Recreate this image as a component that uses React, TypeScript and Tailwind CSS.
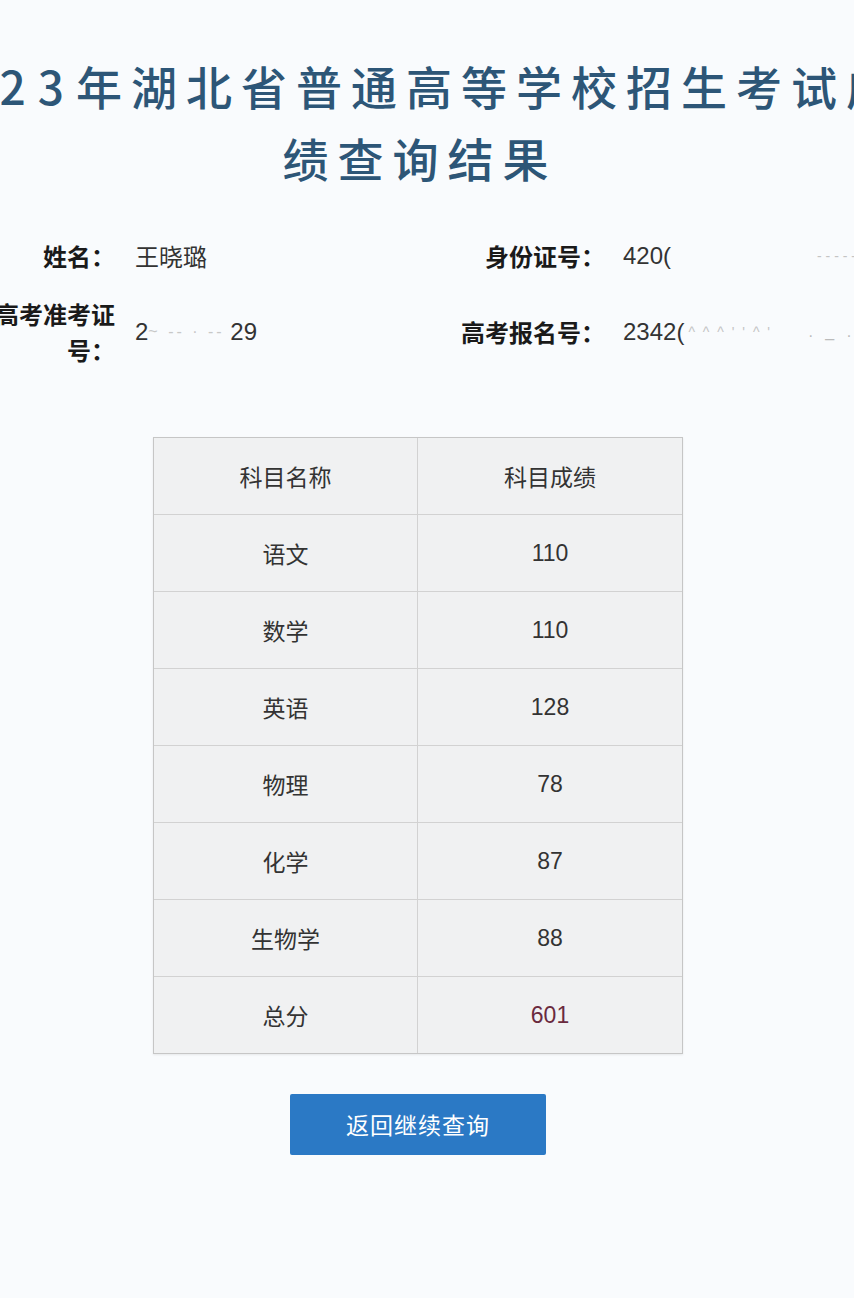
const cjk = "font-['Noto_Sans_CJK_SC',sans-serif]";
const num = "font-['Liberation_Sans','Noto_Sans_CJK_SC',sans-serif]";

const scores = [
  { name: "语文", score: "110" },
  { name: "数学", score: "110" },
  { name: "英语", score: "128" },
  { name: "物理", score: "78" },
  { name: "化学", score: "87" },
  { name: "生物学", score: "88" },
];

function Cell({ children, right }: { children: React.ReactNode; right?: boolean }) {
  return (
    <div
      className={`h-[76px] flex items-center justify-center text-[23px] text-[#333] ${
        right ? "" : "border-r border-[#d2d2d2]"
      }`}
    >
      {children}
    </div>
  );
}

export default function App() {
  return (
    <div className={`w-[854px] h-[1298px] overflow-hidden bg-[#f9fbfd] ${cjk}`}>
      {/* title, cropped on both sides like the screenshot */}
      <div className="pt-[49px] flex flex-col items-center pr-[14px] text-[46px] leading-[72px] tracking-[9px] font-medium text-[#2d5677]">
        <div className="whitespace-nowrap pr-[16px]">
          <span className="tracking-[12px]">2023</span>年湖北省普通高等学校招生考试成
        </div>
        <div className="whitespace-nowrap">绩查询结果</div>
      </div>

      {/* candidate info */}
      <div className="mt-[45px] ml-[-5px] grid grid-cols-[120px_337px_153px_1fr] gap-y-[22px] text-[24px] leading-[36px]">
        <div className="text-right font-bold text-[#1a1a1a]">姓名：</div>
        <div className="pl-5 text-[#333]">王晓璐</div>
        <div className="text-right font-bold text-[#1a1a1a]">身份证号：</div>
        <div className={`pl-[18px] text-[#333] whitespace-nowrap ${num}`}>
          420<span className="inline-block w-[14px] overflow-hidden align-top">(</span>
          <span className="inline-block w-[140px]" />
          <span className="text-[#c4c4c4] text-[14px] align-top">- - - - -</span>
        </div>

        <div className="text-right font-bold text-[#1a1a1a]">
          高考准考证
          <br />
          号：
        </div>
        <div className={`pl-5 flex items-center text-[#333] whitespace-nowrap ${num}`}>
          <span>2</span>
          <span className="shrink-0 text-[#c8c8c8] text-[16px] w-[82px] tracking-[3px] whitespace-nowrap overflow-hidden">~ -- · -- ·,</span>
          <span>29</span>
        </div>
        <div className="text-right font-bold text-[#1a1a1a] flex items-center justify-end">高考报名号：</div>
        <div className={`pl-[18px] flex items-center text-[#333] whitespace-nowrap ${num}`}>
          <span>2342</span>
          <span className="inline-block w-[12px] overflow-hidden">(</span>
          <span className="text-[#c4c4c4] text-[14px] w-[120px] tracking-[2px] self-start mt-[18px]">^ ^ ^ ' ' ^ '</span>
          <span className="text-[#bbb] text-[16px] tracking-[4px]">. _ . !2</span>
        </div>
      </div>

      {/* score table */}
      <div className="mt-[69px] ml-[153px] w-[530px] border border-[#c6c6c6] bg-[#f0f1f2] shadow-[0_1px_2px_rgba(0,0,0,0.08)]">
        <div className="grid grid-cols-2 border-b border-[#d2d2d2]">
          <Cell>科目名称</Cell>
          <Cell right>科目成绩</Cell>
        </div>
        {scores.map((s) => (
          <div key={s.name} className="grid grid-cols-2 border-b border-[#d2d2d2]">
            <Cell>{s.name}</Cell>
            <Cell right>
              <span className={num}>{s.score}</span>
            </Cell>
          </div>
        ))}
        <div className="grid grid-cols-2">
          <Cell>总分</Cell>
          <Cell right>
            <span className={`${num} text-[#6a2a3e]`}>601</span>
          </Cell>
        </div>
      </div>

      <div className="mt-[40px] flex justify-center pr-[18px]">
        <button className="w-[256px] h-[61px] rounded-[2px] bg-[#2b79c5] text-white text-[23px] tracking-[1px]">
          返回继续查询
        </button>
      </div>
    </div>
  );
}
